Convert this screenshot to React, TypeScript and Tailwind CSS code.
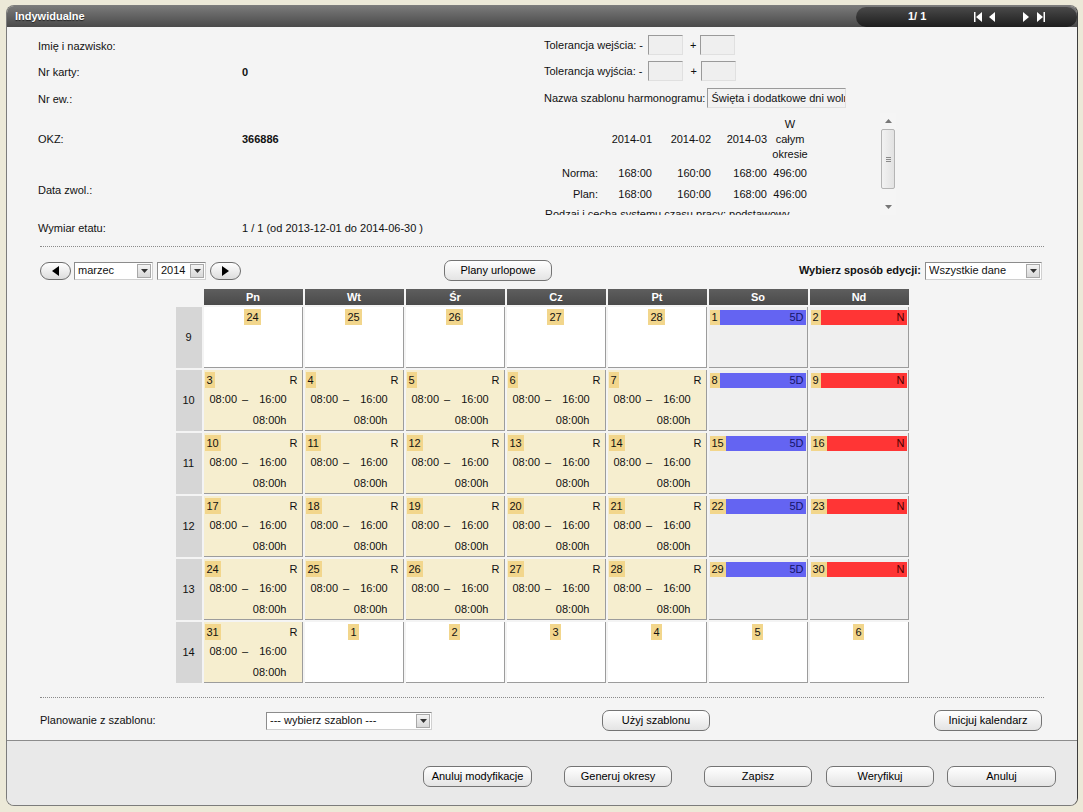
import React from "react";

type Kind = "other" | "work" | "sat" | "sun";
type Day = { d: number; kind: Kind };

const weeks: { n: number; days: Day[] }[] = [
  {
    n: 9,
    days: [
      { d: 24, kind: "other" },
      { d: 25, kind: "other" },
      { d: 26, kind: "other" },
      { d: 27, kind: "other" },
      { d: 28, kind: "other" },
      { d: 1, kind: "sat" },
      { d: 2, kind: "sun" },
    ],
  },
  ...[10, 11, 12, 13].map((n, i) => {
    const start = 3 + i * 7;
    return {
      n,
      days: [
        ...[0, 1, 2, 3, 4].map((k) => ({ d: start + k, kind: "work" as Kind })),
        { d: start + 5, kind: "sat" as Kind },
        { d: start + 6, kind: "sun" as Kind },
      ],
    };
  }),
  {
    n: 14,
    days: [
      { d: 31, kind: "work" },
      { d: 1, kind: "other" },
      { d: 2, kind: "other" },
      { d: 3, kind: "other" },
      { d: 4, kind: "other" },
      { d: 5, kind: "other" },
      { d: 6, kind: "other" },
    ],
  },
];

const dayNames = ["Pn", "Wt", "Śr", "Cz", "Pt", "So", "Nd"];

function Btn({ label, w }: { label: string; w: string }) {
  return (
    <div
      className={`${w} flex h-[21px] items-center justify-center rounded-[7px] border border-[#747474] bg-gradient-to-b from-white to-[#e4e4e4] text-[11px] text-black`}
    >
      {label}
    </div>
  );
}

function Select({ value, w }: { value: string; w: string }) {
  return (
    <div
      className={`${w} flex h-[18px] items-center border border-[#8c8c8c] border-r-[#d0d0d0] border-b-[#d0d0d0] bg-white pl-[3px] pr-[1px]`}
    >
      <span className="flex-1 truncate">{value}</span>
      <div className="flex h-[14px] w-[14px] items-center justify-center border border-[#a8a8a8] bg-gradient-to-b from-[#f4f4f4] to-[#d8d8d8]">
        <svg width="7" height="4" viewBox="0 0 7 4">
          <path d="M0 0h7L3.5 4z" fill="#333" />
        </svg>
      </div>
    </div>
  );
}

function ArrowBtn({ dir }: { dir: "l" | "r" }) {
  return (
    <div className="flex h-[18px] w-[31px] items-center justify-center rounded-full border border-[#6c6c6c] bg-gradient-to-b from-white to-[#dcdcdc]">
      <svg width="7" height="10" viewBox="0 0 7 10">
        {dir === "l" ? <path d="M7 0v10L0 5z" fill="#000" /> : <path d="M0 0v10l7-5z" fill="#000" />}
      </svg>
    </div>
  );
}

function TolInput() {
  return <div className="h-[20px] w-[35px] border border-[#9a9a9a] border-r-[#e0e0e0] border-b-[#e0e0e0] bg-[#efefef]" />;
}

function Cell({ day }: { day: Day }) {
  if (day.kind === "other") {
    return (
      <div className="flex h-[61px] justify-center border-r border-b border-[#9c9c9c] bg-white">
        <span className="mt-[2px] h-[16px] bg-[#f2d68c] px-[2px] leading-[16px]">{day.d}</span>
      </div>
    );
  }
  if (day.kind === "sat" || day.kind === "sun") {
    const sat = day.kind === "sat";
    return (
      <div className="h-[61px] border-r border-b border-[#9c9c9c] bg-[#efefef] pt-[3px] pl-[1px]">
        <div className="flex h-[15px] pr-[1px] leading-[15px]">
          <span className="bg-[#f2d68c] px-[2px]">{day.d}</span>
          <span
            className={`flex-1 pr-[2px] text-right ${sat ? "bg-[#6464f2] text-[#14146a]" : "bg-[#ff3535] text-[#4a0000]"}`}
          >
            {sat ? "5D" : "N"}
          </span>
        </div>
      </div>
    );
  }
  return (
    <div className="flex h-[61px] flex-col border-r border-b border-[#9c9c9c] bg-[#f6eecf]">
      <div className="mt-[2px] flex h-[16px] items-center justify-between pl-[1px] pr-[4px] leading-[16px]">
        <span className="bg-[#f2d68c] px-[2px]">{day.d}</span>
        <span>R</span>
      </div>
      <div className="flex h-[21px] items-center pl-[6px] pt-[2px]">
        <span>08:00</span>
        <span className="ml-[5px]">–</span>
        <span className="ml-[11px]">16:00</span>
      </div>
      <div className="flex h-[21px] w-[83px] items-center justify-end pt-[2px]">08:00h</div>
    </div>
  );
}

function PagerIcon({ kind }: { kind: "first" | "prev" | "next" | "last" }) {
  return (
    <svg width="8" height="10" viewBox="0 0 8 10">
      {kind === "first" && (
        <>
          <rect x="0" y="0" width="1.5" height="10" fill="#fff" />
          <path d="M8 0v10L2 5z" fill="#fff" />
        </>
      )}
      {kind === "prev" && <path d="M7 0v10L1 5z" fill="#fff" />}
      {kind === "next" && <path d="M1 0v10l6-5z" fill="#fff" />}
      {kind === "last" && (
        <>
          <path d="M0 0v10l6-5z" fill="#fff" />
          <rect x="6.5" y="0" width="1.5" height="10" fill="#fff" />
        </>
      )}
    </svg>
  );
}

function Scrollbar() {
  return (
    <div className="flex w-[16px] flex-col items-center bg-[#f5f5f5]">
      <div className="flex h-[16px] items-center justify-center">
        <svg width="7" height="4" viewBox="0 0 7 4">
          <path d="M0 4h7L3.5 0z" fill="#777" />
        </svg>
      </div>
      <div className="flex h-[60px] w-[14px] items-center justify-center rounded-[2px] border border-[#b4b4b4] bg-gradient-to-r from-[#f2f2f2] to-[#e2e2e2]">
        <div className="flex flex-col gap-[1px]">
          <div className="h-px w-[5px] bg-[#8a8a8a]" />
          <div className="h-px w-[5px] bg-[#8a8a8a]" />
          <div className="h-px w-[5px] bg-[#8a8a8a]" />
        </div>
      </div>
      <div className="flex-1" />
      <div className="flex h-[16px] items-center justify-center">
        <svg width="7" height="4" viewBox="0 0 7 4">
          <path d="M0 0h7L3.5 4z" fill="#777" />
        </svg>
      </div>
    </div>
  );
}

export default function App() {
  const labelRows: { label: string; value?: string; bold?: boolean; h: string }[] = [
    { label: "Imię i nazwisko:", h: "h-[26px]" },
    { label: "Nr karty:", value: "0", bold: true, h: "h-[26px]" },
    { label: "Nr ew.:", h: "h-[28px]" },
    { label: "OKZ:", value: "366886", bold: true, h: "h-[52px]" },
    { label: "Data zwol.:", h: "h-[50px]" },
    { label: "Wymiar etatu:", value: "1 / 1 (od 2013-12-01 do 2014-06-30 )", h: "h-[26px]" },
  ];

  return (
    <div className="h-[812px] w-[1083px] bg-[#ece9d8] pt-[5px] pr-[5px] pb-[6px] pl-[6px] font-['Liberation_Sans',Arial,sans-serif] text-[11px] text-[#111]">
      <div className="flex h-full flex-col overflow-hidden rounded-[8px] border border-[#7c7c7c] border-r-[#3c3c3c]">
        {/* title bar */}
        <div className="flex h-[21px] items-center bg-gradient-to-b from-[#7a7a7a] to-[#4a4a4a]">
          <span className="pl-[8px] font-bold text-white [text-shadow:0_1px_1px_#222]">Indywidualne</span>
          <div className="ml-auto flex h-[20px] w-[221px] items-center rounded-full bg-gradient-to-b from-[#4a4a4a] to-[#1e1e1e]">
            <span className="ml-[52px] font-bold text-white">1/ 1</span>
            <div className="ml-[48px] flex items-center">
              <PagerIcon kind="first" />
              <span className="ml-[6px]"><PagerIcon kind="prev" /></span>
              <span className="ml-[26px]"><PagerIcon kind="next" /></span>
              <span className="ml-[7px]"><PagerIcon kind="last" /></span>
            </div>
          </div>
        </div>

        {/* content */}
        <div className="flex flex-1 flex-col bg-[#f4f4f4]">
          <div className="flex">
            <div className="w-[533px] pt-[6px] pl-[31px]">
              {labelRows.map((r) => (
                <div key={r.label} className={`flex items-center ${r.h}`}>
                  <span className="w-[204px]">{r.label}</span>
                  {r.value && <span className={r.bold ? "font-bold" : ""}>{r.value}</span>}
                </div>
              ))}
            </div>
            <div className="pt-[6px]">
              <div className="flex h-[24px] items-center pl-[4px]">
                <span>Tolerancja wejścia: -</span>
                <span className="ml-[5px]"><TolInput /></span>
                <span className="ml-[7px] mr-[4px]">+</span>
                <TolInput />
              </div>
              <div className="flex h-[28px] items-center pl-[4px]">
                <span>Tolerancja wyjścia: -</span>
                <span className="ml-[6px]"><TolInput /></span>
                <span className="ml-[7px] mr-[4px]">+</span>
                <TolInput />
              </div>
              <div className="flex h-[26px] items-center pl-[4px]">
                <span>Nazwa szablonu harmonogramu:</span>
                <div className="ml-[2px] flex h-[20px] w-[139px] items-center overflow-hidden whitespace-nowrap border border-[#9a9a9a] border-r-[#e0e0e0] border-b-[#e0e0e0] bg-[#f2f2f2] pl-[3px]">
                  Święta i dodatkowe dni wolne od pracy
                </div>
              </div>
              <div className="mt-[2px] flex h-[102px] w-[356px]">
                <div className="flex-1 overflow-hidden pt-[2px]">
                  <div className="grid grid-cols-[60px_55px_59px_56px_40px] leading-[15px]">
                    <div className="h-[48px]" />
                    <div className="flex h-[48px] items-center justify-end pr-[3px]">2014-01</div>
                    <div className="flex h-[48px] items-center justify-end pr-[3px]">2014-02</div>
                    <div className="flex h-[48px] items-center justify-end pr-[3px]">2014-03</div>
                    <div className="flex h-[48px] flex-col items-center justify-center">
                      <span>W</span>
                      <span>całym</span>
                      <span>okresie</span>
                    </div>
                    {["Norma:", "Plan:"].map((l) => (
                      <React.Fragment key={l}>
                        <div className="flex h-[21px] items-center justify-end pr-[2px]">{l}</div>
                        <div className="flex h-[21px] items-center justify-end pr-[3px]">168:00</div>
                        <div className="flex h-[21px] items-center justify-end pr-[3px]">160:00</div>
                        <div className="flex h-[21px] items-center justify-end pr-[3px]">168:00</div>
                        <div className="flex h-[21px] items-center justify-end pr-[3px]">496:00</div>
                      </React.Fragment>
                    ))}
                  </div>
                  <div className="whitespace-nowrap pl-[5px] leading-[18px]">
                    Rodzaj i cecha systemu czasu pracy: podstawowy
                  </div>
                </div>
                <Scrollbar />
              </div>
            </div>
          </div>

          <div className="mx-[33px] mt-[5px] border-t border-dotted border-[#8a8a8a]" />

          {/* navigation row */}
          <div className="mt-[13px] flex h-[21px] items-center pl-[33px] pr-[35px]">
            <ArrowBtn dir="l" />
            <span className="ml-[3px]"><Select value="marzec" w="w-[79px]" /></span>
            <span className="ml-[4px]"><Select value="2014" w="w-[49px]" /></span>
            <span className="ml-[4px]"><ArrowBtn dir="r" /></span>
            <span className="ml-[203px]"><Btn label="Plany urlopowe" w="w-[108px]" /></span>
            <div className="ml-auto flex items-center">
              <span className="mr-[4px] font-bold">Wybierz sposób edycji:</span>
              <Select value="Wszystkie dane" w="w-[117px]" />
            </div>
          </div>

          {/* calendar */}
          <div className="mx-auto mt-[8px] grid w-[733px] grid-cols-[26px_repeat(7,99px)] gap-[2px]">
            <div />
            {dayNames.map((n) => (
              <div
                key={n}
                className="flex h-[16px] items-center justify-center bg-gradient-to-b from-[#5e5e5e] to-[#4a4a4a] font-bold text-white"
              >
                {n}
              </div>
            ))}
            {weeks.map((w) => (
              <React.Fragment key={w.n}>
                <div className="flex h-[61px] items-center justify-center bg-[#d6d6d6]">{w.n}</div>
                {w.days.map((d, i) => (
                  <Cell key={i} day={d} />
                ))}
              </React.Fragment>
            ))}
          </div>

          <div className="mx-[33px] mt-[14px] border-t border-dotted border-[#8a8a8a]" />

          <div className="mt-[12px] flex h-[21px] items-center pl-[33px]">
            <span className="w-[226px]">Planowanie z szablonu:</span>
            <Select value="--- wybierz szablon ---" w="w-[166px]" />
            <span className="ml-[170px]"><Btn label="Użyj szablonu" w="w-[108px]" /></span>
            <span className="ml-[224px]"><Btn label="Inicjuj kalendarz" w="w-[108px]" /></span>
          </div>
          <div className="flex-1" />
        </div>

        {/* footer */}
        <div className="flex h-[65px] border-t border-[#8c8c8c] bg-[#e9e9e9] pt-[25px] pr-[21px]">
          <div className="ml-auto flex">
            <Btn label="Anuluj modyfikacje" w="w-[109px]" />
            <span className="ml-[32px]"><Btn label="Generuj okresy" w="w-[108px]" /></span>
            <span className="ml-[32px]"><Btn label="Zapisz" w="w-[108px]" /></span>
            <span className="ml-[14px]"><Btn label="Weryfikuj" w="w-[108px]" /></span>
            <span className="ml-[13px]"><Btn label="Anuluj" w="w-[109px]" /></span>
          </div>
        </div>
      </div>
    </div>
  );
}
